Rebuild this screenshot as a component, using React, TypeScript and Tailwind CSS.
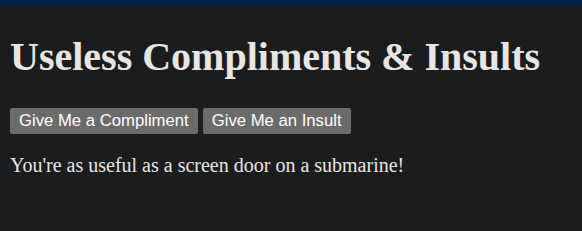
export default function App() {
  return (
    <div className="min-h-[231px] bg-[#1b1c1e] text-[#e8e6e3]">
      <div className="h-[8px] bg-gradient-to-b from-[#00214b] via-[#00214b] to-[#1b1c1e]" />
      <div className="px-[10px] font-['Liberation_Serif',serif]">
        <h1 className="mt-[29px] text-[40px] font-bold leading-[40px]">Useless Compliments &amp; Insults</h1>
        <div className="mt-[31px] flex gap-[5px] font-['Liberation_Sans',sans-serif]">
          <button className="h-[26px] rounded-[2px] bg-[#6b6b6b] px-[9px] text-[16.7px] leading-[20px] text-white">Give Me a Compliment</button>
          <button className="h-[26px] rounded-[2px] bg-[#6b6b6b] px-[9px] text-[16.7px] leading-[20px] text-white">Give Me an Insult</button>
        </div>
        <p className="mt-[21px] text-[20px] leading-[20px]">You're as useful as a screen door on a submarine!</p>
      </div>
    </div>
  );
}
